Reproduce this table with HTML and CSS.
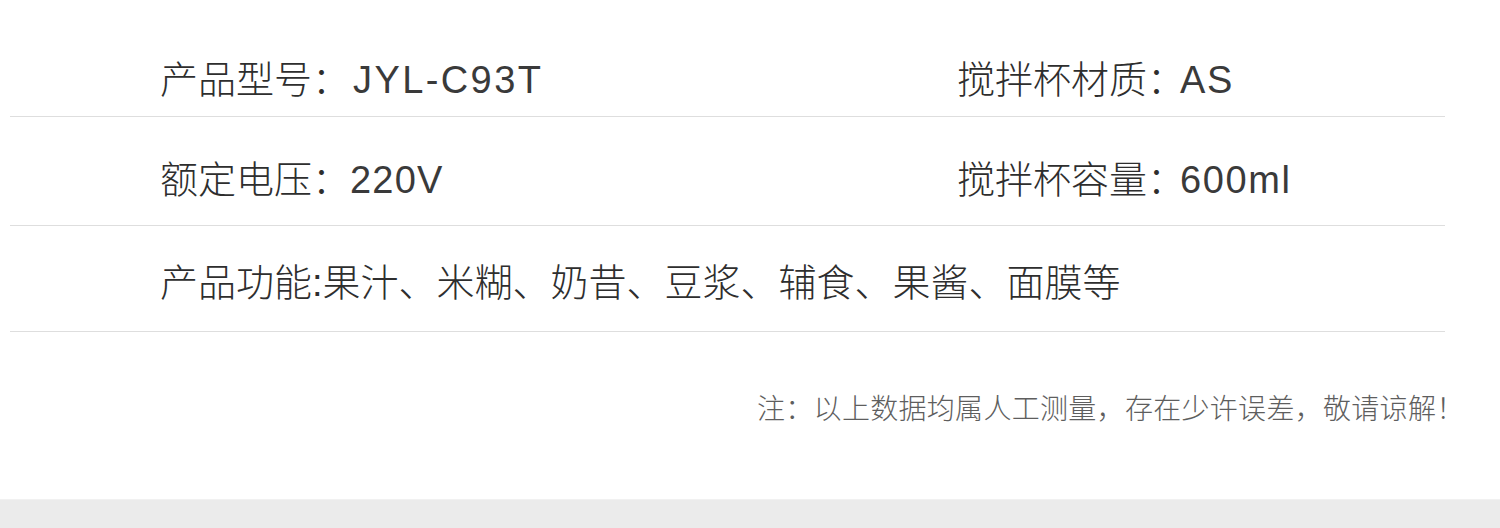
FILE: index.html
```html
<!DOCTYPE html>
<html lang="zh-CN">
<head>
<meta charset="utf-8">
<title>产品参数</title>
<link rel="stylesheet" href="styles.css">
</head>
<body>
<div class="page">
  <div class="specs">
    <div class="row row-1">
      <div class="cell">产品型号：<span class="latin model">JYL-C93T</span></div>
      <div class="cell">搅拌杯材质：<span class="latin pull">AS</span></div>
    </div>
    <div class="row row-2">
      <div class="cell">额定电压：<span class="latin">220V</span></div>
      <div class="cell">搅拌杯容量：<span class="latin pull">600ml</span></div>
    </div>
    <div class="row row-3">
      <div class="cell full">产品功能<span class="latin colon">:</span>果汁、米糊、奶昔、豆浆、辅食、果酱、面膜等</div>
    </div>
  </div>
  <p class="note">注：以上数据均属人工测量，存在少许误差，敬请谅解！</p>
</div>
<div class="footer-band"></div>
</body>
</html>
```

FILE: styles.css
```css
* { box-sizing: border-box; }

html, body {
  margin: 0;
  padding: 0;
  background: #ffffff;
}

body {
  width: 1500px;
  height: 528px;
  overflow: hidden;
  font-family: "Noto Sans CJK SC", "Liberation Sans", sans-serif;
  font-weight: 300;
  color: #2e2e2e;
  display: flex;
  flex-direction: column;
}

.page {
  flex: 1;
  padding: 0 55px 0 10px;
}

.specs {
  display: flex;
  flex-direction: column;
}

.row {
  display: grid;
  grid-template-columns: 797px 1fr;
  padding-left: 150px;
  border-bottom: 1px solid #dedede;
  font-size: 38px;
  line-height: 38px;
  box-sizing: content-box;
}

.row-1 { height: 58px; padding-top: 58px; }
.row-2 { height: 67px; padding-top: 41px; }
.row-3 { height: 70px; padding-top: 35px; }

.cell {
  white-space: nowrap;
}

.cell.full {
  grid-column: 1 / -1;
}

.latin {
  font-family: "Liberation Sans", "Noto Sans CJK SC", sans-serif;
  font-weight: 400;
  color: #3a3a3a;
  letter-spacing: 1.2px;
}

.latin.model {
  margin-left: 3px;
  letter-spacing: 2.4px;
}

.latin.pull {
  margin-left: -5px;
  letter-spacing: 1.6px;
}

.latin.colon {
  letter-spacing: 0;
  color: inherit;
}

.note {
  margin: 61px 0 0 0;
  padding-left: 747px;
  font-size: 28px;
  line-height: 28px;
  letter-spacing: 0.3px;
  color: #5e5e5e;
  white-space: nowrap;
}

.footer-band {
  height: 29px;
  background: #ebebeb;
  border-top: 1px solid #f1f1f1;
}
```
